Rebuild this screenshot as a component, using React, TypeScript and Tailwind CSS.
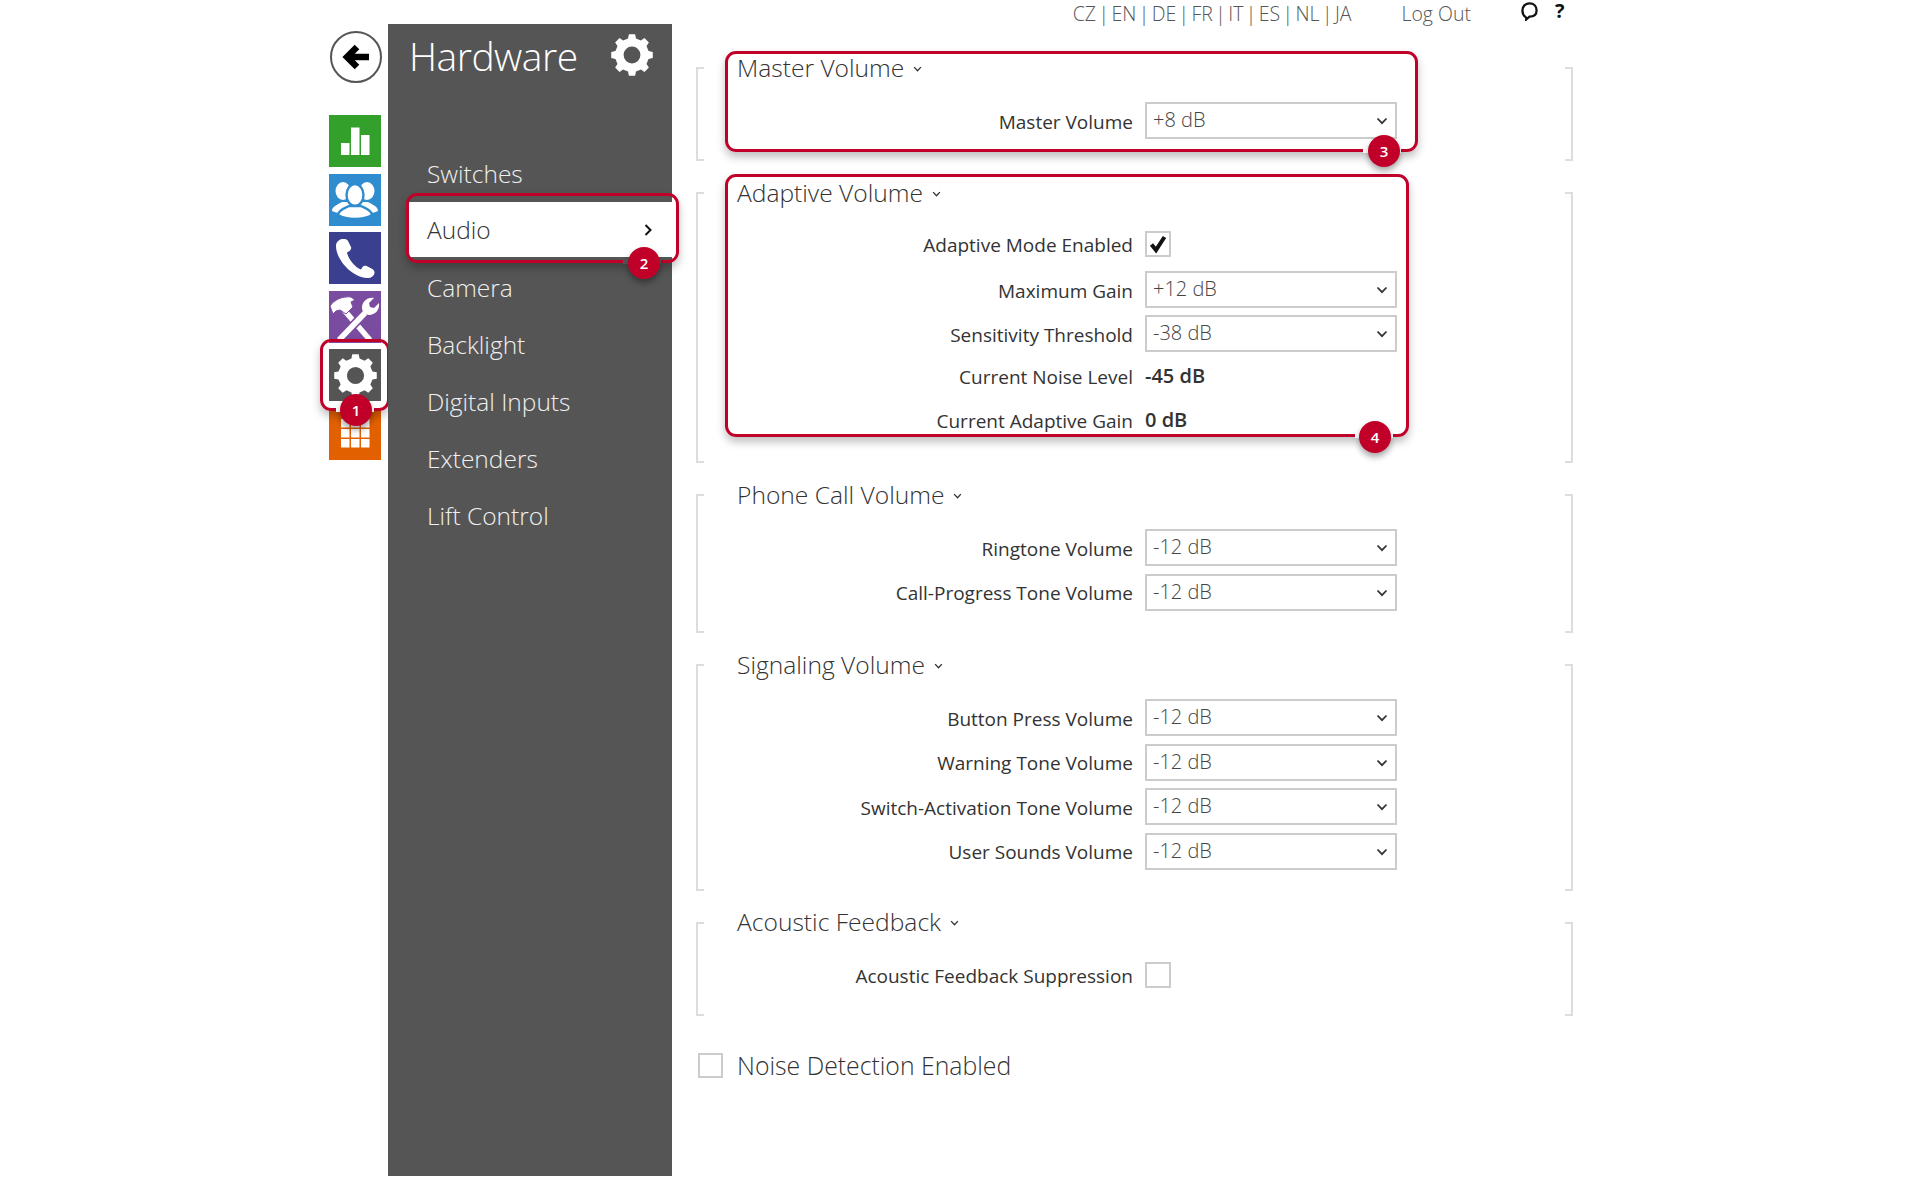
import React from "react";

const font = { light: "font-['Open_Sans',sans-serif] font-light" };

// 8-tooth gear used in the rail and the sidebar header
const gearPath = (() => {
  const pts: string[] = [];
  const teeth = 8;
  for (let i = 0; i < teeth; i++) {
    const a = (i * Math.PI * 2) / teeth - Math.PI / 2;
    const step = (Math.PI * 2) / teeth;
    const corners: [number, number][] = [
      [a - step * 0.3, 16.2],
      [a - step * 0.19, 20],
      [a + step * 0.19, 20],
      [a + step * 0.3, 16.2],
    ];
    corners.forEach(([ang, r]) => {
      pts.push(`${(20 + r * Math.cos(ang)).toFixed(2)} ${(20 + r * Math.sin(ang)).toFixed(2)}`);
    });
  }
  return `M${pts.join(" L")} Z M20 12 A8 8 0 1 0 20 28 A8 8 0 1 0 20 12 Z`;
})();

const Gear = ({ className }: { className: string }) => (
  <svg viewBox="0 0 40 40" className={className} fill="currentColor">
    <path d={gearPath} fillRule="evenodd" />
  </svg>
);

const Tile = ({ bg, children }: { bg: string; children: React.ReactNode }) => (
  <div className={`w-[52px] h-[52px] ${bg}`}>
    <svg viewBox="0 0 52 52" className="w-full h-full" fill="#fff">
      {children}
    </svg>
  </div>
);

const Badge = ({ n, className }: { n: number; className: string }) => (
  <div
    className={`absolute w-[32px] h-[32px] rounded-full bg-[#c1002a] text-white text-[15px] font-semibold flex items-center justify-center shadow-[0_4px_6px_rgba(0,0,0,0.35)] font-['Open_Sans',sans-serif] ${className}`}
  >
    {n}
  </div>
);

const Highlight = ({ className, children }: { className: string; children?: React.ReactNode }) => (
  <div
    className={`absolute border-[3.5px] border-[#c1002a] rounded-[11px] shadow-[0_5px_8px_rgba(0,0,0,0.25)] pointer-events-none ${className}`}
  >
    {children}
  </div>
);

const Chevron = ({ className }: { className: string }) => (
  <svg viewBox="0 0 12 8" className={className} fill="none" stroke="currentColor" strokeWidth="1.8">
    <path d="M1.5 1.5 6 6.2l4.5-4.7" />
  </svg>
);

const SelectBox = ({ value }: { value: string }) => (
  <div className="relative w-[252px] h-[37px]">
    <select
      defaultValue={value}
      className="w-full h-full appearance-none bg-white border-2 border-[#cccccc] pl-[6px] pb-[1px] text-[20px] font-light text-[#444] font-['Open_Sans',sans-serif] outline-none"
    >
      <option>{value}</option>
    </select>
    <Chevron className="absolute right-[9px] top-[15px] w-[12px] h-[8px] text-[#333]" />
  </div>
);

const CheckBox = ({ checked }: { checked?: boolean }) => (
  <div className="w-[26px] h-[26px] border-2 border-[#cccccc] bg-white flex items-center justify-center">
    {checked && (
      <svg viewBox="0 0 20 20" className="w-[20px] h-[20px]" fill="none" stroke="#111" strokeWidth="4">
        <path d="M3.5 10.5 8 16 16.5 3" />
      </svg>
    )}
  </div>
);

const Row = ({ label, up, children }: { label: string; up?: boolean; children: React.ReactNode }) => (
  <div className={`flex items-center h-[37px] gap-[12px] ${up ? "-translate-y-[2px]" : ""}`}>
    <div className="w-[395px] text-right text-[19px] text-[#333] pt-[3px]">{label}</div>
    {children}
  </div>
);

const Section = ({
  title,
  bottom = "pb-[22.5px]",
  gap = "gap-[7.5px]",
  children,
  overlay,
}: {
  title: string;
  bottom?: string;
  gap?: string;
  children: React.ReactNode;
  overlay?: React.ReactNode;
}) => (
  <section className="relative flex">
    <div className="w-[8px] mt-[15px] border-2 border-r-0 border-[#dddddd]" />
    <div className={`flex-1 pl-[33px] ${bottom}`}>
      <h2 className={`h-[32px] flex items-center gap-[9px] text-[24.6px] text-[#333] ${font.light}`}>
        {title}
        <Chevron className="w-[9px] h-[6px] text-[#333] mt-[1px]" />
      </h2>
      <div className={`mt-[18px] pl-[1px] flex flex-col ${gap}`}>{children}</div>
    </div>
    <div className="w-[8px] mt-[15px] border-2 border-l-0 border-[#dddddd]" />
    {overlay}
  </section>
);

const Val = ({ children }: { children: React.ReactNode }) => (
  <div className="font-semibold text-[20px] text-[#333]">{children}</div>
);

const langs = ["CZ", "EN", "DE", "FR", "IT", "ES", "NL", "JA"];
const menu = ["Switches", "Audio", "Camera", "Backlight", "Digital Inputs", "Extenders", "Lift Control"];

export default function App() {
  return (
    <div className="flex w-[1920px] h-[1200px] bg-white pl-[329px] font-['Open_Sans',sans-serif] overflow-hidden">
      {/* icon rail */}
      <div className="w-[59px] pt-[31px]">
        <button className="w-[52px] h-[52px] ml-[1px] rounded-full border-2 border-[#555] flex items-center justify-center">
          <svg viewBox="0 0 28 26" className="w-[28px] h-[26px]" fill="none" stroke="#000" strokeWidth="6.5">
            <path d="M27 13H6" />
            <path d="M15 3 5 13l10 10" />
          </svg>
        </button>
        <div className="mt-[32px] flex flex-col gap-[6.6px] relative">
          <Tile bg="bg-[#33a02c]">
            <rect x="12" y="28" width="8.5" height="12" />
            <rect x="22" y="12.5" width="8.5" height="27.5" />
            <rect x="32" y="20" width="8.5" height="20" />
          </Tile>
          <Tile bg="bg-[#2f8ccf]">
            <ellipse cx="14" cy="17" rx="7.5" ry="9" />
            <ellipse cx="38" cy="17" rx="7.5" ry="9" />
            <path d="M3 37c0-5 7-7 10-9h26c3 2 10 4 10 9-4 2-9 3-14 3H17c-5 0-10-1-14-3z" />
            <g stroke="#2f8ccf" strokeWidth="2.4">
              <ellipse cx="26" cy="21" rx="8.5" ry="11" />
              <path d="M9 41c0-5 7-7 11-9h12c4 2 11 4 11 9-5 3-11 4-17 4s-12-1-17-4z" />
            </g>
          </Tile>
          <Tile bg="bg-[#3b3f8f]">
            <path d="M13 7c-3 .5-6 3-6 7 0 13 15 31 31 32 4 .3 7-2 7.5-5 .3-2-1-3.5-3-4.5l-5-2.5c-1.5-.6-3-.3-4 1l-1.5 2.5c-6-2-13-11-14-17l2.5-1.5c1.5-1 2-2.5 1.5-4L19 9c-1-2-3-2.3-6-2z" />
          </Tile>
          <Tile bg="bg-[#7a4ca0]">
            <path d="M41 49 15 19" stroke="#fff" strokeWidth="5.5" fill="none" />
            <path d="M1 15c4-6 12-10 21-9l4 3-4 2 2 5-7 7-6-4-4 1-3 3z" stroke="#7a4ca0" strokeWidth="1" />
            <path d="M10 49 36 22" stroke="#7a4ca0" strokeWidth="9" fill="none" />
            <path d="M10 49 36 22" stroke="#fff" strokeWidth="5.5" fill="none" />
            <path d="M33 17c0-6 5-11 12-10l-5 5 1 4 4 1 5-5c1 7-4 12-10 12-3 0-7-3-7-7z" />
          </Tile>
          <div className="w-[52px] h-[52px] bg-[#555] flex items-center justify-center text-white">
            <Gear className="w-[43px] h-[43px]" />
          </div>
          <Tile bg="bg-[#e36000]">
            {[12, 22, 32].map((x) =>
              [11, 21, 31].map((y) => <rect key={`${x}-${y}`} x={x} y={y} width="8.5" height="8.5" />)
            )}
          </Tile>
          <Highlight className="left-[-9px] top-[224px] w-[70px] h-[72px]">
            <div className="absolute left-[13px] bottom-[-3.5px] w-[38px] h-[3.5px] bg-white" />
          </Highlight>
          <Badge n={1} className="left-[11px] top-[279px]" />
        </div>
      </div>

      {/* hardware menu */}
      <aside className="relative mt-[24px] w-[284px] h-[1152px] bg-[#555]">
        <div className="flex items-center justify-between h-[66px] pl-[21px] pr-[19px]">
          <h1 className={`text-[39px] tracking-[-0.5px] text-white pb-[2px] ${font.light}`}>Hardware</h1>
          <Gear className="w-[42px] h-[42px] text-white -mt-[4px]" />
        </div>
        <nav className="mt-[55px]">
          {menu.map((m) =>
            m === "Audio" ? (
              <div key={m} className="h-[57px] pl-[21px]">
                <div className="relative h-[55px] bg-white flex items-center pl-[18px] pt-[2px] text-[#333] text-[24.5px] font-light">
                  {m}
                  <svg viewBox="0 0 8 12" className="absolute right-[20px] top-[22px] w-[8px] h-[12px]" fill="none" stroke="#111" strokeWidth="2">
                    <path d="M1.5 1 6.5 6l-5 5" />
                  </svg>
                </div>
              </div>
            ) : (
              <div key={m} className="h-[57px] flex items-center pl-[39px] pt-[2px] text-[24.5px] font-light text-[#f0f0f0]">
                {m}
              </div>
            )
          )}
        </nav>
        <Highlight className="left-[18px] top-[169px] w-[273px] h-[70px]">
          <div className="absolute left-[214px] bottom-[-3.5px] w-[38px] h-[3.5px] bg-[#555]" />
        </Highlight>
        <Badge n={2} className="left-[240px] top-[223px]" />
      </aside>

      {/* settings */}
      <main className="ml-[24px] w-[877px] text-[#333]">
        <div className="h-[28px] flex items-center justify-end pr-[8px] text-[19.5px] leading-[24px] font-light text-[#555]">
          <div className="flex items-center gap-[2.4px]">
            {langs.map((l, i) => (
              <React.Fragment key={l}>
                {i > 0 && <span>|</span>}
                <span>{l}</span>
              </React.Fragment>
            ))}
          </div>
          <span className="ml-[50px]">Log Out</span>
          <svg viewBox="0 0 18 20" className="ml-[50px] w-[17px] h-[19px] -mt-[5px]" fill="none" stroke="#111" strokeWidth="2.4">
            <path d="M5.5 16.5 C3 15 1.5 12 1.5 9 C1.5 4.5 4.5 1.5 9 1.5 C13.5 1.5 16.5 4.5 16.5 9 C16.5 13.5 13.5 15.5 9 15.5 L5.5 18.5 Z" />
          </svg>
          <span className="ml-[17px] w-[10px] font-bold text-[20px] text-[#111] leading-none -mt-[6px]">?</span>
        </div>

        <div className="mt-[24px] flex flex-col gap-[16px]">
          <Section
            title="Master Volume"
            bottom="pb-[22px]"
            overlay={
              <>
                <Highlight className="left-[29px] top-[-1px] w-[693px] h-[101px]">
                  <div className="absolute left-[635px] bottom-[-3.5px] w-[38px] h-[3.5px] bg-white" />
                </Highlight>
                <Badge n={3} className="left-[672px] top-[83px]" />
              </>
            }
          >
            <Row label="Master Volume">
              <SelectBox value="+8 dB" />
            </Row>
          </Section>
          <Section
            title="Adaptive Volume"
            bottom="pb-[23px]"
            gap="gap-[7px]"
            overlay={
              <>
                <Highlight className="left-[29px] top-[-3px] w-[684px] h-[263px]">
                  <div className="absolute left-[627px] bottom-[-3.5px] w-[38px] h-[3.5px] bg-white" />
                </Highlight>
                <Badge n={4} className="left-[663px] top-[244px]" />
              </>
            }
          >
            <Row label="Adaptive Mode Enabled" up>
              <CheckBox checked />
            </Row>
            <Row label="Maximum Gain">
              <SelectBox value="+12 dB" />
            </Row>
            <Row label="Sensitivity Threshold">
              <SelectBox value="-38 dB" />
            </Row>
            <Row label="Current Noise Level" up>
              <Val>-45 dB</Val>
            </Row>
            <Row label="Current Adaptive Gain" up>
              <Val>0 dB</Val>
            </Row>
          </Section>
          <Section title="Phone Call Volume">
            <Row label="Ringtone Volume">
              <SelectBox value="-12 dB" />
            </Row>
            <Row label="Call-Progress Tone Volume">
              <SelectBox value="-12 dB" />
            </Row>
          </Section>
          <Section title="Signaling Volume" bottom="pb-[21px]">
            <Row label="Button Press Volume">
              <SelectBox value="-12 dB" />
            </Row>
            <Row label="Warning Tone Volume">
              <SelectBox value="-12 dB" />
            </Row>
            <Row label="Switch-Activation Tone Volume">
              <SelectBox value="-12 dB" />
            </Row>
            <Row label="User Sounds Volume">
              <SelectBox value="-12 dB" />
            </Row>
          </Section>
          <Section title="Acoustic Feedback">
            <Row label="Acoustic Feedback Suppression">
              <CheckBox />
            </Row>
          </Section>
        </div>

        <div className="mt-[37px] flex items-center h-[25px] pl-[2px]">
          <div className="w-[25px] h-[25px] border-2 border-[#cccccc]" />
          <span className={`ml-[14px] text-[24.8px] text-[#333] ${font.light}`}>Noise Detection Enabled</span>
        </div>
      </main>
    </div>
  );
}
